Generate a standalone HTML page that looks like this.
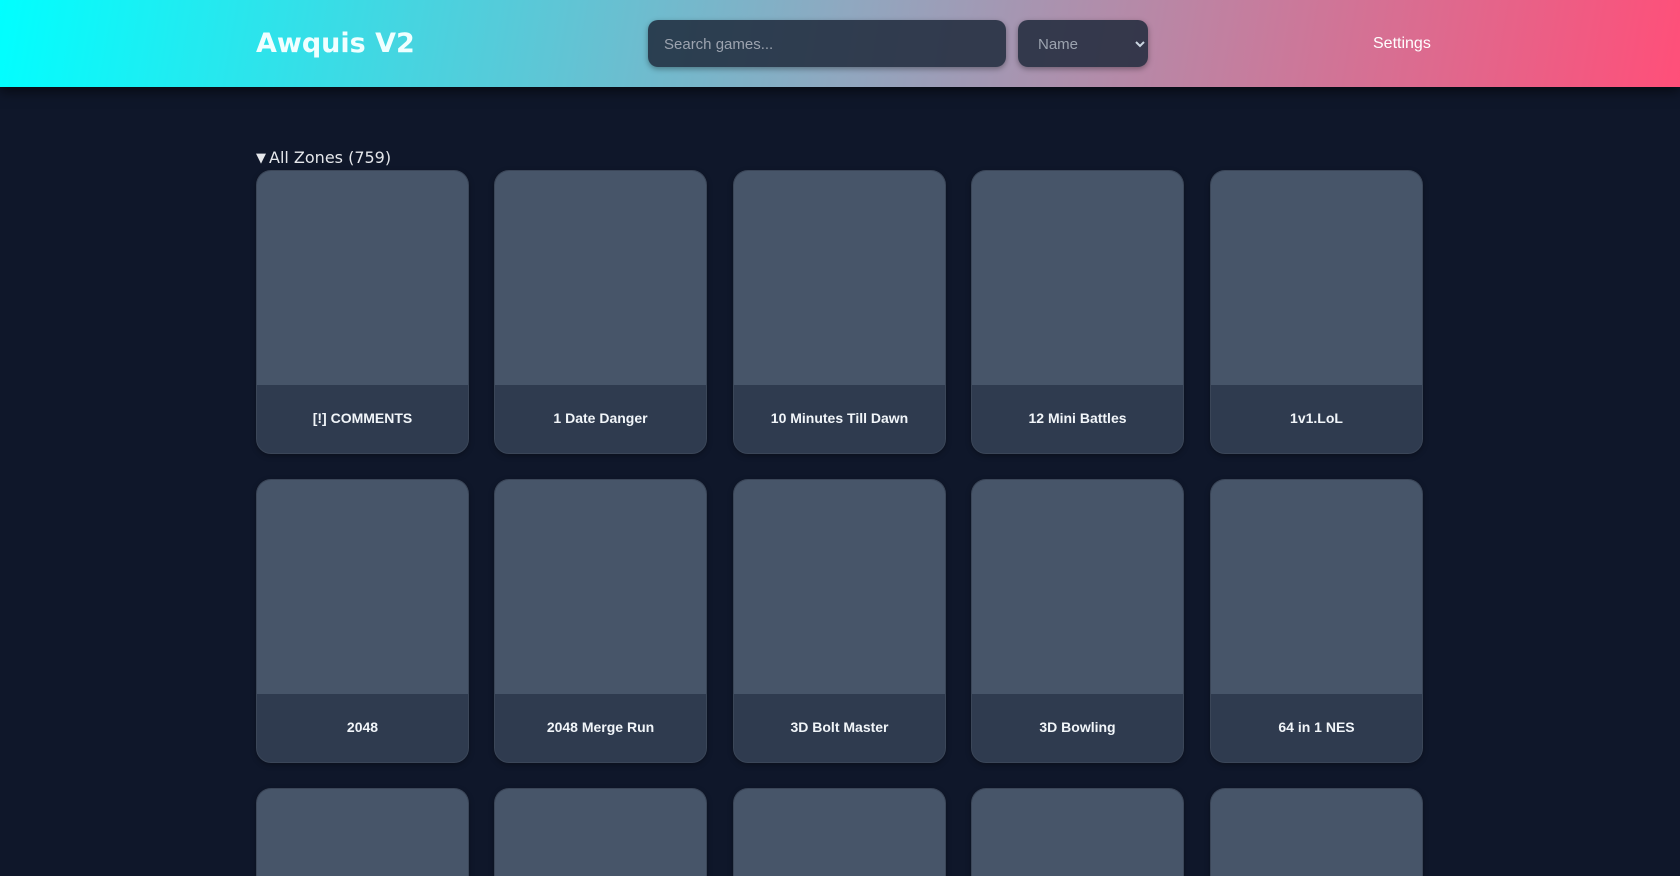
<!DOCTYPE html>
<html><head><meta charset="utf-8"><style>
*{box-sizing:border-box;margin:0;padding:0}
html,body{width:1680px;height:876px;overflow:hidden}
body{position:relative;background:#0f172a;font-family:"Liberation Sans",sans-serif;color:#fff}
header{position:absolute;left:0;top:0;width:1680px;height:87px;background:linear-gradient(100deg,#00ffff 0%,#8fa8c0 50%,#ff4f79 100%);box-shadow:0 4px 12px rgba(0,0,0,.6);z-index:2}
.title{position:absolute;left:256px;top:28px;font:bold 27px "DejaVu Sans",sans-serif;color:#f0ffff}
.search{position:absolute;left:648px;top:20px;width:358px;height:47px;border-radius:10px;background:rgba(30,41,59,.85);box-shadow:0 2px 6px rgba(0,0,0,.35);color:#9ca3af;font-size:15px;padding:16px 16px 0}
.sel{position:absolute;left:1018px;top:20px;width:130px;height:47px;border-radius:10px;background:rgba(30,41,59,.85);box-shadow:0 2px 6px rgba(0,0,0,.35);color:#9ca3af;font-size:15px;padding:16px 20px 0}
.sel svg{position:absolute;right:3px;top:20px}
.settings{position:absolute;left:1373px;top:35px;font-size:16px;color:#fff}
.zones{position:absolute;left:256px;top:148px;font:16px "DejaVu Sans",sans-serif;color:#e5e7eb}
.zones b{font-size:13px;font-weight:normal;vertical-align:1px;margin-right:3px}
.card{position:absolute;width:213px;height:284px;border-radius:15px;overflow:hidden;background:#334155;border:1px solid #3b4658;box-shadow:0 2px 6px rgba(0,0,0,.3)}
.card .img{height:214px;background:#475569}
.card .lbl{height:70px;background:#2f3b4f;text-align:center;font-weight:bold;font-size:14px;line-height:66px;color:#f1f5f9}
.cut{height:88px;border-bottom:none;border-radius:15px 15px 0 0}
</style></head><body>
<header>
<div class="title">Awquis V2</div>
<div class="search">Search games...</div>
<div class="sel">Name<svg width="10" height="8" viewBox="0 0 10 8"><path d="M1 2l4 4 4-4" stroke="#cbd5e1" stroke-width="2" fill="none"/></svg></div>
<div class="settings">Settings</div>
</header>
<div class="zones"><b>▼</b>All Zones (759)</div>
<div class="card" style="left:256px;top:170px"><div class="img"></div><div class="lbl">[!] COMMENTS</div></div>
<div class="card" style="left:494px;top:170px"><div class="img"></div><div class="lbl">1 Date Danger</div></div>
<div class="card" style="left:733px;top:170px"><div class="img"></div><div class="lbl">10 Minutes Till Dawn</div></div>
<div class="card" style="left:971px;top:170px"><div class="img"></div><div class="lbl">12 Mini Battles</div></div>
<div class="card" style="left:1210px;top:170px"><div class="img"></div><div class="lbl">1v1.LoL</div></div>
<div class="card" style="left:256px;top:479px"><div class="img"></div><div class="lbl">2048</div></div>
<div class="card" style="left:494px;top:479px"><div class="img"></div><div class="lbl">2048 Merge Run</div></div>
<div class="card" style="left:733px;top:479px"><div class="img"></div><div class="lbl">3D Bolt Master</div></div>
<div class="card" style="left:971px;top:479px"><div class="img"></div><div class="lbl">3D Bowling</div></div>
<div class="card" style="left:1210px;top:479px"><div class="img"></div><div class="lbl">64 in 1 NES</div></div>
<div class="card cut" style="left:256px;top:788px"><div class="img"></div></div>
<div class="card cut" style="left:494px;top:788px"><div class="img"></div></div>
<div class="card cut" style="left:733px;top:788px"><div class="img"></div></div>
<div class="card cut" style="left:971px;top:788px"><div class="img"></div></div>
<div class="card cut" style="left:1210px;top:788px"><div class="img"></div></div>
</body></html>
